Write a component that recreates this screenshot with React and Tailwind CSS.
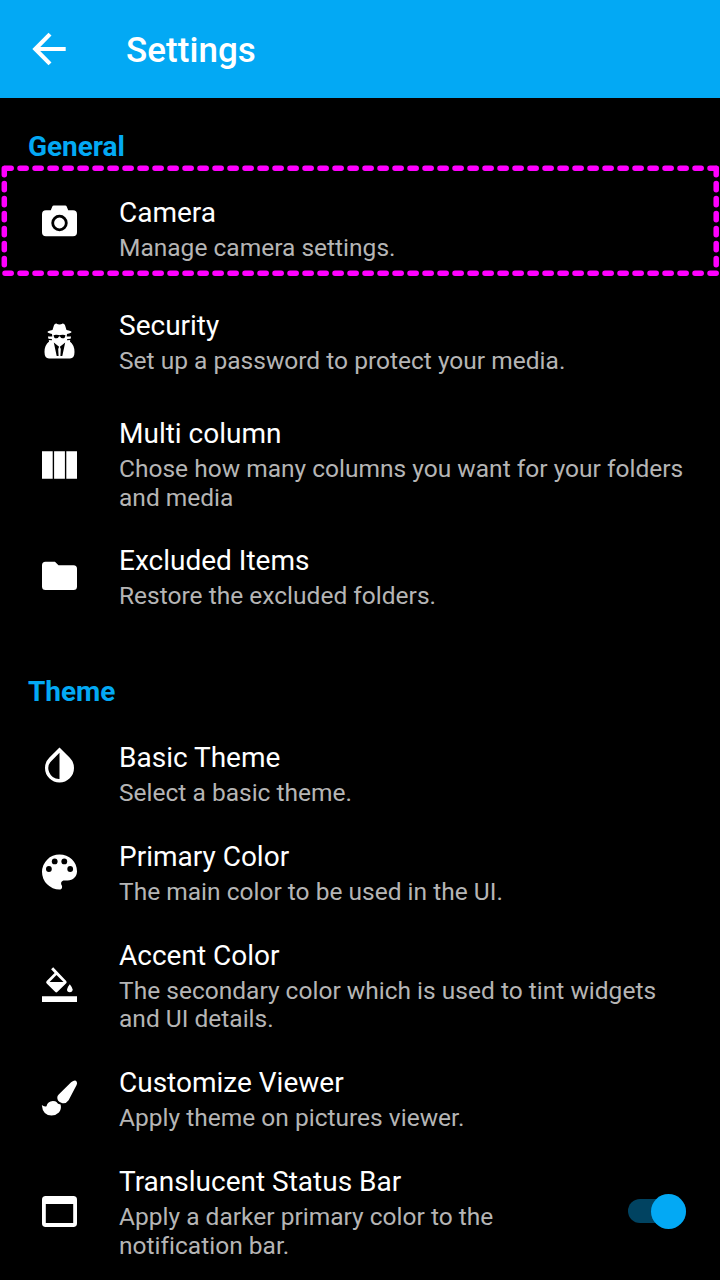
import React from 'react';

const icons = {
  camera: (
    <>
      <path fill="#fff" d="M4.5 8.2H9.3L10.8 4.6Q11.2 3.6 12.3 3.6H23.7Q24.8 3.6 25.2 4.6L26.7 8.2H31.5Q35.5 8.2 35.5 12.2V30.2Q35.5 34.2 31.5 34.2H4.5Q.5 34.2.5 30.2V12.2Q.5 8.2 4.5 8.2Z" />
      <circle cx="18" cy="21" r="6.8" fill="#fff" stroke="#000" strokeWidth="2.8" />
    </>
  ),
  spy: (
    <>
      <path fill="#fff" d="M11 7L12.4 2.5Q13 .5 14.8.5Q16.4 1.4 18 1.4T21.2.5Q23 .5 23.6 2.5L25 7Q30 8 30 9T25.5 11L25.2 13.5H29.6L28.4 18.5Q33 22 33 29Q33 35.5 28.5 35.5H7.5Q3 35.5 3 29Q3 22 7.6 18.5L6.4 13.5H10.8L10.5 11Q6 10 6 9T11 7Z" />
      <path fill="#000" d="M12 12.2Q14 11.3 17 12Q18 12.3 19 12Q22 11.3 24 12.2L23.3 14.4Q22.8 15.3 21 15.3Q19.3 15.3 18.8 13.8L18 13.3L17.2 13.8Q16.7 15.3 15 15.3Q13.2 15.3 12.7 14.4ZM12.3 19.4L17.6 23.7L16.7 26L17.1 33H15.2ZM23.7 19.4L18.4 23.7L19.3 26L18.9 33H20.8ZM6 15.7L10.2 16.1L10.6 17.2L6 17ZM30 15.7L25.8 16.1L25.4 17.2L30 17Z" />
    </>
  ),
  columns: <path fill="#fff" d="M.5 4.3H11.2V31.7H.5ZM12.6 4.3H23.4V31.7H12.6ZM24.8 4.3H35.5V31.7H24.8Z" />,
  folder: <path fill="#fff" d="M4 3.8H13.5L17 7.3H32Q35.5 7.3 35.5 10.8V28.5Q35.5 32 32 32H4Q.5 32 .5 28.5V7.3Q.5 3.8 4 3.8Z" />,
  drop: (
    <>
      <path fill="#fff" d="M18 .5L28.3 10.8A14.5 14.5 0 1 1 7.7 10.8Z" />
      <path fill="#000" d="M18 5.8L10.4 13.4A10.7 10.7 0 0 0 18 32Z" />
    </>
  ),
  palette: (
    <>
      <path fill="#fff" d="M18 .5A17.5 17.5 0 0 0 18 35.5C20.4 35.5 21.2 33.2 20.2 31.2C18.8 28.8 20 26.4 22.8 26.4H26.1C31.6 26.4 35.5 22.5 35.5 17.2C35.5 7.6 27.6.5 18 .5Z" />
      <g fill="#000"><circle cx="7.4" cy="15" r="2.9" /><circle cx="13.2" cy="7.4" r="2.9" /><circle cx="22.8" cy="7.4" r="2.9" /><circle cx="28.7" cy="15" r="2.9" /></g>
    </>
  ),
  fill: (
    <>
      <path fill="#fff" d="M.5 29.2H35.5V35H.5Z" />
      <path fill="#fff" d="M11.7.2L9.6 2.3L13.1 6L5.2 14Q4 15.2 5.2 16.4L13.6 24.8Q14.8 26 16 24.8L24.7 16.2Q25.7 15.2 24.7 14Z" />
      <path fill="#000" d="M15 8.1L22 15H8.1Z" />
      <path fill="#fff" d="M28.3 17.2Q25.5 20.7 25.5 22.5A2.8 2.8 0 0 0 31.1 22.5Q31.1 20.7 28.3 17.2Z" />
    </>
  ),
  brush: (
    <>
      <path fill="#fff" d="M29.6 2.2Q33.8-.7 35.2 1.7Q36 2.8 35.1 5.1L27.1 20.2Q24.5 24 20.3 23Q15.4 21.5 15.8 17.1Q16 15.6 17.2 14.5Z" />
      <path fill="#fff" d="M.3 25Q2.5 27 5 26.2Q6.1 21.4 11.4 21.1Q14.1 21.1 15 22.1Q16 24.2 19.1 24.6Q20.2 29.1 17.4 32.6Q14.4 35.6 10 35.6Q1.2 35.3.3 25Z" />
    </>
  ),
  window: <path fill="#fff" fillRule="evenodd" d="M4.2 3H31.8Q35.5 3 35.5 6.7V30.2Q35.5 34 31.8 34H4.2Q.5 34 .5 30.2V6.7Q.5 3 4.2 3ZM4.3 11V30.1H31.7V11Z" />,
};

function Switch() {
  return (
    <div role="switch" aria-checked="true" className="flex h-9 w-[58px] items-center">
      <div className="flex h-6 w-full items-center justify-end rounded-full bg-[#014361]">
        <div className="size-[35px] shrink-0 rounded-full bg-[#03a9f4]" />
      </div>
    </div>
  );
}

function Setting({ icon, title, lines, className = '', iconClass = '-mt-[3px]', children }) {
  return (
    <div className={'flex items-center ' + className}>
      <svg viewBox="-0.5 0 36 36" className={'ml-[41px] mr-[42px] size-9 shrink-0 overflow-visible ' + iconClass}>{icons[icon]}</svg>
      <div className="grow whitespace-nowrap">
        <h3 className="text-[28px] leading-[34px] text-white">{title}</h3>
        <p className="mt-[4px] text-[24.5px] leading-[28.5px] tracking-[0.01px] text-[#b5b5b5]">
          {lines.map((line) => <span key={line} className="block">{line}</span>)}
        </p>
      </div>
      {children && <div className="-mt-[3px] mr-[34px]">{children}</div>}
    </div>
  );
}

function Highlight() {
  return (
    <svg className="pointer-events-none absolute left-0 top-[65px] h-[115px] w-full" viewBox="0 163 720 115" fill="none" stroke="#ff00ff" strokeWidth="5.5" strokeLinecap="round" strokeDasharray="6.2 8.8">
      <path d="M5 168.2H716.5" />
      <path d="M5 273.2H716.5" />
      <path d="M4.3 168.6V273.5" />
      <path d="M716.2 168.6V273.5" />
    </svg>
  );
}

export default function App() {
  return (
    <div className="h-[1280px] w-[720px] overflow-hidden bg-black font-['Roboto',sans-serif]">
      <header className="flex h-[98px] items-center bg-[#03a9f4] text-white">
        <svg viewBox="0 0 34 34" className="ml-8 mr-[60px] size-[34px] shrink-0" fill="none" stroke="currentColor" strokeWidth="4.2">
          <path d="M18 2.1L3.3 17L18 31.9M3.5 17H33.7" />
        </svg>
        <h1 className="pt-1 text-[35px] font-medium leading-[42px] tracking-[0.05px]">Settings</h1>
      </header>
      <main className="relative">
        <h2 className="pl-7 pt-8 text-[28px] font-bold leading-[34px] tracking-[-0.05px] text-[#03a9f4]">General</h2>
        <Setting icon="camera" title="Camera" lines={['Manage camera settings.']} className="mt-[32px]" iconClass="-mt-[19px]" />
        <Setting icon="spy" title="Security" lines={['Set up a password to protect your media.']} className="mt-[46.5px]" />
        <Setting icon="columns" title="Multi column" lines={['Chose how many columns you want for your folders', 'and media']} className="mt-[41.5px]" iconClass="mt-[1px]" />
        <Setting icon="folder" title="Excluded Items" lines={['Restore the excluded folders.']} className="mt-[32px]" />
        <h2 className="mt-[64px] pl-7 text-[28px] font-bold leading-[34px] tracking-[-0.05px] text-[#03a9f4]">Theme</h2>
        <Setting icon="drop" title="Basic Theme" lines={['Select a basic theme.']} className="mt-[32px]" iconClass="-mt-[17px]" />
        <Setting icon="palette" title="Primary Color" lines={['The main color to be used in the UI.']} className="mt-[32.5px]" iconClass="-mt-[2px]" />
        <Setting icon="fill" title="Accent Color" lines={['The secondary color which is used to tint widgets', 'and UI details.']} className="mt-[32.5px]" />
        <Setting icon="brush" title="Customize Viewer" lines={['Apply theme on pictures viewer.']} className="mt-[32.5px]" />
        <Setting icon="window" title="Translucent Status Bar" lines={['Apply a darker primary color to the', 'notification bar.']} className="mt-[32.5px]">
          <Switch />
        </Setting>
        <Highlight />
      </main>
    </div>
  );
}
